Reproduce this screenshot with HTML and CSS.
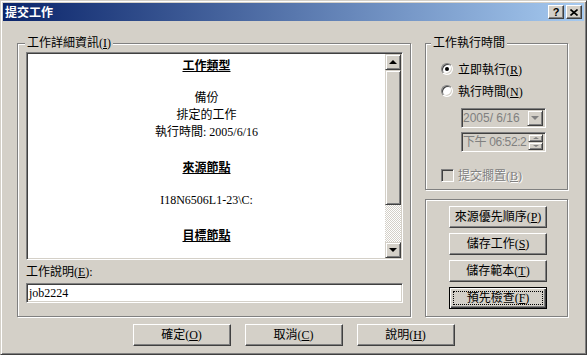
FILE: index.html
```html
<!DOCTYPE html>
<html>
  <head>
    <meta charset="utf-8">
    <title>提交工作</title>
<link rel="stylesheet" href="styles.css">
  </head>
  <body>
<div class="window">
  <div class="titlebar">
    <span class="title">提交工作</span>
    <div class="caption-buttons">
      <span class="cap-btn help">?</span>
      <span class="cap-btn close">
        <svg width="8" height="7" viewBox="0 0 8 7"><path d="M0.5 0.5 L7.5 6.5 M7.5 0.5 L0.5 6.5" stroke="#000" stroke-width="1.6" fill="none"/></svg>
      </span>
    </div>
  </div>

  <div class="content">
    <div class="main">
      <!-- left: job details -->
      <div class="group details">
        <span class="group-label">工作詳細資訊(<u>I</u>)</span>
        <div class="infobox">
          <div class="info-text">
            <p class="head">工作類型</p>
            <p>&nbsp;</p>
            <p>備份</p>
            <p>排定的工作</p>
            <p>執行時間: 2005/6/16</p>
            <p>&nbsp;</p>
            <p class="head">來源節點</p>
            <p>&nbsp;</p>
            <p>I18N6506L1-23\C:</p>
            <p>&nbsp;</p>
            <p class="head">目標節點</p>
          </div>
          <div class="scrollbar">
            <div class="sb-btn raised arrow-up"></div>
            <div class="sb-thumb raised"></div>
            <div class="sb-track"></div>
            <div class="sb-btn raised arrow-down"></div>
          </div>
        </div>
        <span class="field-label">工作說明(<u>E</u>):</span>
        <div class="textbox">job2224</div>
      </div>

      <div class="side">
        <!-- schedule -->
        <div class="group schedule">
          <span class="group-label">工作執行時間</span>
          <div class="radio-row first">
            <span class="radio checked"></span>
            <span>立即執行(<u>R</u>)</span>
          </div>
          <div class="radio-row">
            <span class="radio"></span>
            <span>執行時間(<u>N</u>)</span>
          </div>
          <div class="combo">
            <span class="combo-text">2005/ 6/16</span>
            <span class="combo-btn raised arrow-down gray"></span>
          </div>
          <div class="combo time">
            <span class="combo-text">下午 06:52:2</span>
            <span class="spinner">
              <span class="spin raised arrow-up small gray"></span>
              <span class="spin raised arrow-down small gray"></span>
            </span>
          </div>
          <div class="check-row">
            <span class="checkbox"></span>
            <span class="disabled">提交擱置(<u>B</u>)</span>
          </div>
        </div>

        <!-- actions -->
        <div class="group actions">
          <button class="btn">來源優先順序(<u>P</u>)</button>
          <button class="btn">儲存工作(<u>S</u>)</button>
          <button class="btn">儲存範本(<u>T</u>)</button>
          <button class="btn default">預先檢查(<u>F</u>)</button>
        </div>
      </div>
    </div>

    <div class="footer">
      <button class="btn">確定(<u>O</u>)</button>
      <button class="btn">取消(<u>C</u>)</button>
      <button class="btn">說明(<u>H</u>)</button>
    </div>
  </div>
</div>
  </body>
</html>
```

FILE: styles.css
```css
body {
  margin: 0;
  background-color: #d4d0c8;
  font-family: "Liberation Serif", "Noto Sans CJK TC", serif;
  font-size: 12px;
  color: #000;
}

.window {
  width: 587px;
  height: 355px;
  box-sizing: border-box;
  border: 1px solid;
  border-color: #d4d0c8 #404040 #404040 #d4d0c8;
  box-shadow: inset 1px 1px #fff, inset -1px -1px #808080;
  padding: 2px;
  background-color: #d4d0c8;
  display: flex;
  flex-direction: column;
}

.titlebar {
  height: 18px;
  flex-shrink: 0;
  background: linear-gradient(to right, #0a246a, #a6caf0);
  display: flex;
  align-items: center;
  justify-content: space-between;
  padding: 0 2px;
}

.title {
  color: #fff;
  font-family: "Noto Sans CJK TC", sans-serif;
  font-weight: bold;
  font-size: 12px;
  line-height: 14px;
}

.caption-buttons {
  display: flex;
  gap: 2px;
}

.cap-btn {
  width: 16px;
  height: 14px;
  box-sizing: border-box;
  border: 1px solid;
  border-color: #fff #404040 #404040 #fff;
  box-shadow: inset -1px -1px #808080;
  background-color: #d4d0c8;
  display: flex;
  align-items: center;
  justify-content: center;
}

.help {
  font-family: "Liberation Sans", sans-serif;
  font-weight: bold;
  font-size: 11px;
  line-height: 12px;
}

.raised {
  box-sizing: border-box;
  border: 1px solid;
  border-color: #d4d0c8 #404040 #404040 #d4d0c8;
  box-shadow: inset 1px 1px #fff, inset -1px -1px #808080;
  background-color: #d4d0c8;
}

.content {
  flex: 1;
  padding-top: 22px;
  display: flex;
  flex-direction: column;
}

.main {
  display: flex;
  gap: 14px;
  margin-left: 14px;
  height: 274px;
}

.group {
  box-sizing: border-box;
  border: 1px solid #808080;
  box-shadow: inset 1px 1px #fff, 1px 1px #fff;
  display: flex;
  flex-direction: column;
  align-items: flex-start;
}

.group-label {
  margin-top: -8px;
  padding: 0 2px;
  height: 14px;
  line-height: 14px;
  background-color: #d4d0c8;
  white-space: nowrap;
}

.details {
  width: 394px;
  height: 274px;
}

.details .group-label {
  margin-left: 7px;
}

.infobox {
  margin: 2px 0 0 8px;
  width: 377px;
  height: 208px;
  box-sizing: border-box;
  border: 1px solid;
  border-color: #808080 #fff #fff #808080;
  box-shadow: inset 1px 1px #404040, inset -1px -1px #d4d0c8;
  padding: 1px;
  background-color: #fff;
  display: flex;
}

.info-text {
  flex: 1;
  text-align: center;
  padding-top: 2px;
  line-height: 17px;
}

.info-text p {
  margin: 0;
}

.info-text .head {
  font-family: "Noto Sans CJK TC", sans-serif;
  font-weight: bold;
  text-decoration: underline;
}

.scrollbar {
  width: 16px;
  display: flex;
  flex-direction: column;
}

.sb-btn {
  height: 16px;
  position: relative;
}

.sb-thumb {
  height: 135px;
}

.sb-track {
  flex: 1;
  background: repeating-conic-gradient(#fff 0 25%, #d4d0c8 0 50%) 0 0 / 2px 2px;
}

.arrow-up::after,
.arrow-down::after {
  content: "";
  position: absolute;
  left: 50%;
  top: 50%;
  width: 0;
  height: 0;
  border-left: 4px solid transparent;
  border-right: 4px solid transparent;
  transform: translate(-50%, -50%);
}

.arrow-up::after {
  border-bottom: 4px solid #000;
}

.arrow-down::after {
  border-top: 4px solid #000;
}

.gray.arrow-up::after {
  border-bottom-color: #808080;
}

.gray.arrow-down::after {
  border-top-color: #808080;
}

.small.arrow-up::after,
.small.arrow-down::after {
  border-left-width: 3px;
  border-right-width: 3px;
  border-top-width: 2px;
  border-bottom-width: 2px;
}

.field-label {
  margin: 5px 0 0 8px;
  line-height: 14px;
  height: 14px;
}

.textbox {
  margin: 4px 0 0 8px;
  width: 377px;
  height: 20px;
  box-sizing: border-box;
  border: 1px solid;
  border-color: #808080 #fff #fff #808080;
  box-shadow: inset 1px 1px #404040, inset -1px -1px #d4d0c8;
  padding: 0 2px;
  background-color: #fff;
  line-height: 18px;
}

.side {
  width: 143px;
  display: flex;
  flex-direction: column;
  gap: 9px;
}

.schedule {
  height: 147px;
  flex-shrink: 0;
}

.schedule .group-label {
  margin-left: 5px;
}

.radio-row,
.check-row {
  display: flex;
  align-items: center;
  gap: 5px;
  height: 16px;
  margin: 6px 0 0 15px;
  white-space: nowrap;
}

.radio-row.first {
  margin-top: 11px;
}

.check-row {
  margin-top: 15px;
  gap: 4px;
}

.radio {
  width: 12px;
  height: 12px;
  box-sizing: border-box;
  border-radius: 50%;
  border: 1px solid;
  border-color: #808080 #fff #fff #808080;
  box-shadow: inset 1px 1px #404040, inset -1px -1px #d4d0c8;
  background-color: #fff;
  position: relative;
}

.radio.checked::after {
  content: "";
  position: absolute;
  left: 3px;
  top: 3px;
  width: 4px;
  height: 4px;
  border-radius: 50%;
  background-color: #000;
}

.checkbox {
  width: 13px;
  height: 13px;
  box-sizing: border-box;
  border: 1px solid;
  border-color: #808080 #fff #fff #808080;
  box-shadow: inset 1px 1px #404040, inset -1px -1px #d4d0c8;
  background-color: #d4d0c8;
}

.disabled {
  color: #808080;
  text-shadow: 1px 1px #fff;
}

.combo {
  margin: 9px 0 0 35px;
  width: 85px;
  height: 20px;
  box-sizing: border-box;
  border: 1px solid;
  border-color: #808080 #fff #fff #808080;
  box-shadow: inset 1px 1px #404040, inset -1px -1px #d4d0c8;
  padding: 2px 2px 2px 1px;
  background-color: #d4d0c8;
  display: flex;
  align-items: center;
}

.combo.time {
  margin-top: 4px;
}

.combo-text {
  flex: 1;
  white-space: pre;
  color: #808080;
  font-family: "Liberation Sans", "Noto Sans CJK TC", sans-serif;
  font-size: 12px;
  line-height: 14px;
}

.time .combo-text {
  letter-spacing: -0.4px;
}

.combo-btn {
  width: 16px;
  height: 16px;
  flex-shrink: 0;
  position: relative;
}

.spinner {
  width: 15px;
  height: 16px;
  flex-shrink: 0;
  display: flex;
  flex-direction: column;
}

.spin {
  height: 8px;
  position: relative;
}

.actions {
  flex: 1;
  padding: 6px 0 0 23px;
  gap: 5px;
}

.btn {
  width: 98px;
  height: 22px;
  box-sizing: border-box;
  border: 1px solid;
  border-color: #fff #404040 #404040 #fff;
  box-shadow: inset -1px -1px #808080;
  background-color: #d4d0c8;
  font-family: "Liberation Serif", "Noto Sans CJK TC", serif;
  font-size: 12px;
  color: #000;
  padding: 0;
  line-height: 14px;
  position: relative;
  white-space: nowrap;
}

.btn.default {
  border-color: #000;
  box-shadow: inset 1px 1px #fff, inset -1px -1px #404040, inset -2px -2px #808080;
}

.btn.default::after {
  content: "";
  position: absolute;
  left: 3px;
  top: 3px;
  right: 3px;
  bottom: 3px;
  border: 1px dotted #000;
}

.footer {
  display: flex;
  justify-content: center;
  gap: 14px;
  margin-top: 7px;
}
```
